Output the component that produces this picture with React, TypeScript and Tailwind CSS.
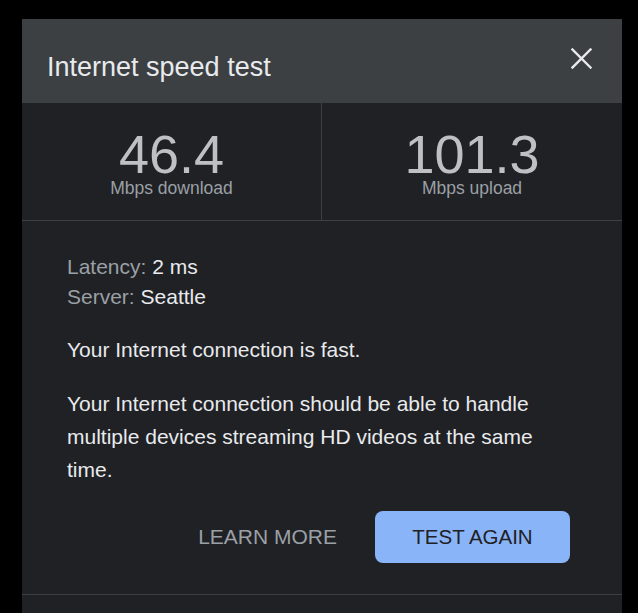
import React from 'react';

export default function App() {
    return (
        <div className="min-h-screen bg-black pt-[19px] pl-[22px] pr-[16px]" style={{ fontFamily: '"Liberation Sans", Arial, sans-serif' }}>
            <div className="w-[600px] bg-[#202124]">
                {/* header */}
                <div className="h-[84px] bg-[#3c4043] flex items-start justify-between pl-[25px] pr-[30px]">
                    <h1 className="mt-[33px] text-[27px] leading-[31px] text-[#e8eaed]">Internet speed test</h1>
                    <button className="mt-[29px]" aria-label="Close">
                        <svg width="21" height="21" viewBox="0 0 21 21">
                            <path d="M1.5 1.5 L19.5 19.5 M19.5 1.5 L1.5 19.5" stroke="#e8eaed" strokeWidth="2.4" strokeLinecap="square" />
                        </svg>
                    </button>
                </div>

                {/* results */}
                <div className="grid grid-cols-2 h-[118px] border-b border-[#3c4043]">
                    <div className="flex flex-col items-center border-r border-[#3c4043]">
                        <p className="mt-[26px] text-[54px] leading-[50px] text-[#bdc1c6]">46.4</p>
                        <p className="text-[17.5px] leading-[18px] text-[#9aa0a6]">Mbps download</p>
                    </div>
                    <div className="flex flex-col items-center">
                        <p className="mt-[26px] text-[54px] leading-[50px] text-[#bdc1c6]">101.3</p>
                        <p className="text-[17.5px] leading-[18px] text-[#9aa0a6]">Mbps upload</p>
                    </div>
                </div>

                <div className="px-[45px] pt-[31px] pb-[31px] border-b border-[#3c4043] text-[21px] text-[#e8eaed]">
                    <p className="leading-[30px]"><span className="text-[#9aa0a6]">Latency:</span> 2 ms</p>
                    <p className="leading-[30px]"><span className="text-[#9aa0a6]">Server:</span> Seattle</p>

                    <p className="mt-[21px] leading-[33px]">Your Internet connection is fast.</p>
                    <p className="mt-[21px] leading-[33px]">
                        Your Internet connection should be able to handle multiple devices streaming HD videos at the same time.
                    </p>

                    <div className="mt-[25px] mr-[7px] flex items-center justify-end gap-[38px]">
                        <button className="text-[21px] text-[#9aa0a6]">LEARN MORE</button>
                        <button className="w-[195px] h-[52px] rounded-[8px] bg-[#8ab4f8] text-[20.5px] text-[#202124]">TEST AGAIN</button>
                    </div>
                </div>
                <div className="h-[40px]"></div>
            </div>
        </div>
    );
}
